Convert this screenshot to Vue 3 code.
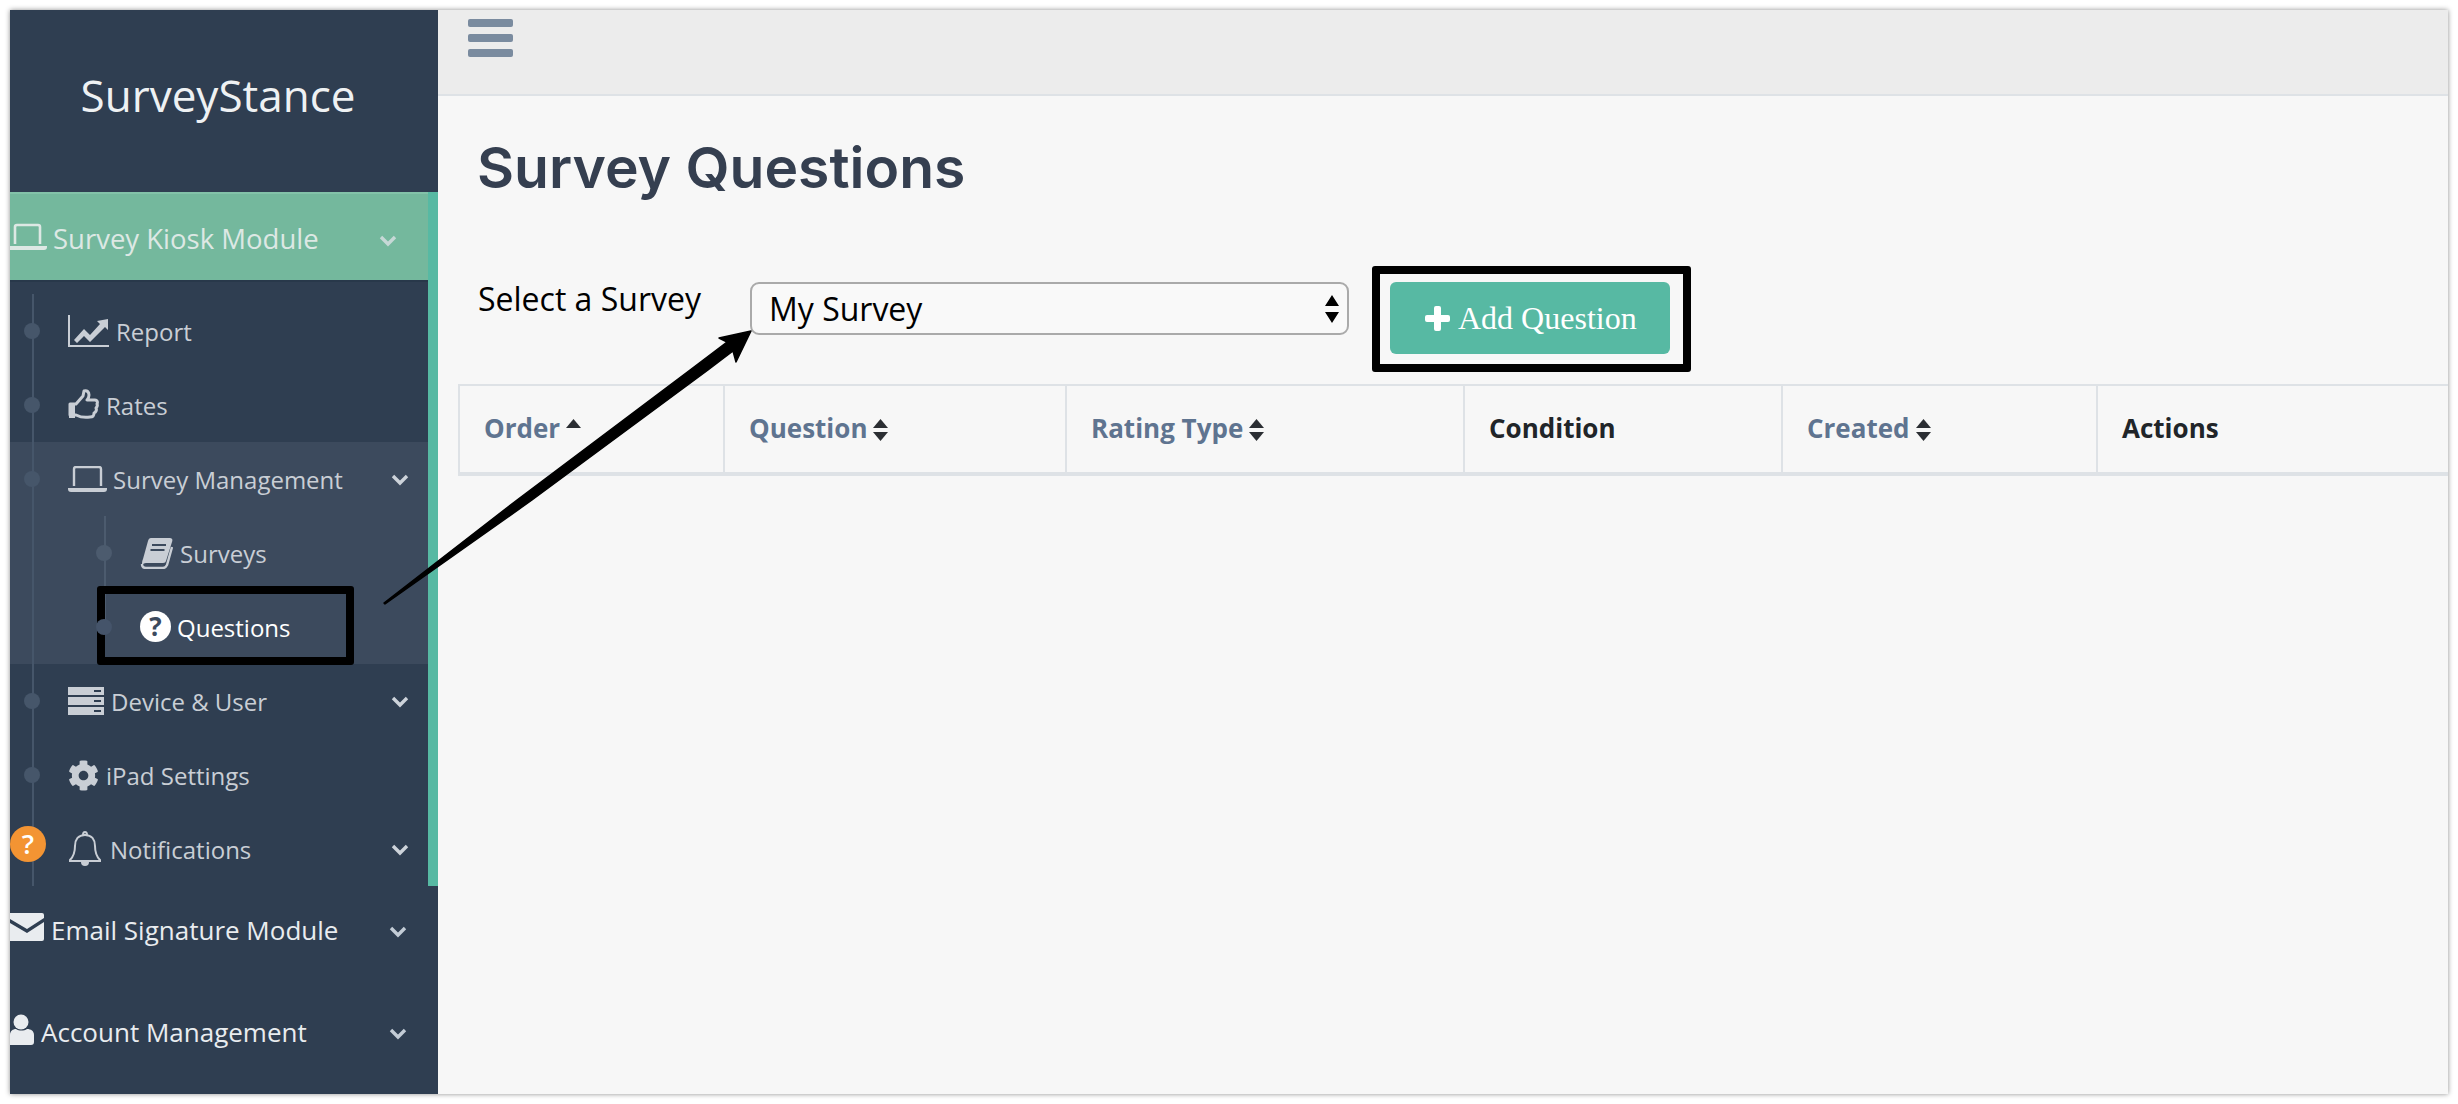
<script setup>
const columns = [
  { label: 'Order', sort: 'asc' },
  { label: 'Question', sort: 'both' },
  { label: 'Rating Type', sort: 'both' },
  { label: 'Condition', sort: '' },
  { label: 'Created', sort: 'both' },
  { label: 'Actions', sort: '' }
]
const cog = 'M487.4 315.7l-42.6-24.6c4.3-23.2 4.3-47 0-70.2l42.6-24.6c4.9-2.8 7.1-8.6 5.5-14-11.1-35.6-30-67.8-54.7-94.6-3.8-4.1-10-5.1-14.8-2.3L380.8 110c-17.9-15.4-38.5-27.3-60.8-35.1V25.8c0-5.6-3.9-10.5-9.4-11.7-36.7-8.2-74.3-7.8-109.2 0-5.5 1.2-9.4 6.1-9.4 11.7V75c-22.2 7.9-42.8 19.8-60.8 35.1L88.7 85.5c-4.9-2.8-11-1.9-14.8 2.3-24.7 26.7-43.6 58.9-54.7 94.6-1.7 5.4.6 11.2 5.5 14L67.3 221c-4.3 23.2-4.3 47 0 70.2l-42.6 24.6c-4.9 2.8-7.1 8.6-5.5 14 11.1 35.6 30 67.8 54.7 94.6 3.8 4.1 10 5.1 14.8 2.3l42.6-24.6c17.9 15.4 38.5 27.3 60.8 35.1v49.2c0 5.6 3.9 10.5 9.4 11.7 36.7 8.2 74.3 7.8 109.2 0 5.5-1.2 9.4-6.1 9.4-11.7v-49.2c22.2-7.9 42.8-19.8 60.8-35.1l42.6 24.6c4.9 2.8 11 1.9 14.8-2.3 24.7-26.7 43.6-58.9 54.7-94.6 1.5-5.5-.7-11.3-5.6-14.1zM256 336c-44.1 0-80-35.9-80-80s35.9-80 80-80 80 35.9 80 80-35.9 80-80 80z'
</script>

<template>
  <div class="page">
    <div class="window">
      <aside class="sidebar">
        <div class="brand">SurveyStance</div>
        <div class="module-group">
          <div class="module-head">
            <svg class="laptop-top" viewBox="0 0 37 29" width="37" height="29"><path d="M5 21V4a2 2 0 0 1 2-2h21a2 2 0 0 1 2 2v17" fill="none" stroke="currentColor" stroke-width="2.6"/><path d="M0 23h37v1a3 3 0 0 1-3 3H0z" fill="currentColor"/></svg>
            <span>Survey Kiosk Module</span>
            <svg class="chev head-chev" viewBox="0 0 18 12" width="18" height="12"><path d="M2 2l7 7 7-7" fill="none" stroke="currentColor" stroke-width="3.4"/></svg>
          </div>
          <div class="tree">
            <div class="row">
              <i class="dot"></i>
              <svg class="ico" style="width:41px" viewBox="0 0 41 32" width="41" height="32"><path d="M1 0v31h40" fill="none" stroke="currentColor" stroke-width="2"/><path d="M6 25l10-11 6 6L32 9l-3-3 11-2v11l-3-3-15 15-6-6-7 7z" fill="currentColor"/></svg>
              <span class="gap7">Report</span>
            </div>
            <div class="row">
              <i class="dot"></i>
              <svg class="ico" style="width:31px" viewBox="0 0 31 33" width="31" height="33"><path d="M2 15h6l7-8 1-5c3-1 5 1 5 4 0 2-1 4-2 5h8c2 0 3 2 2 4 1 2 0 3-1 4 1 2 0 4-2 5 0 3-1 4-4 4-6 1-10 0-14-2H2z" fill="none" stroke="currentColor" stroke-width="3" stroke-linejoin="round"/><path d="M1 15h6v14H1z" fill="currentColor"/></svg>
              <span class="gap7">Rates</span>
            </div>
            <div class="highlight">
              <div class="row">
                <i class="dot"></i>
                <svg class="ico" style="width:39px" viewBox="0 0 39 26" width="39" height="26"><path d="M6 20V3a2 2 0 0 1 2-2h23a2 2 0 0 1 2 2v17" fill="none" stroke="currentColor" stroke-width="2.4"/><path d="M0 22h39v1a3 3 0 0 1-3 3H3a3 3 0 0 1-3-3z" fill="currentColor"/></svg>
                <span class="gap6">Survey Management</span>
                <svg class="chev" viewBox="0 0 18 12" width="18" height="12"><path d="M2 2l7 7 7-7" fill="none" stroke="currentColor" stroke-width="3.4"/></svg>
              </div>
              <div class="subtree">
                <div class="row sub">
                  <i class="dot"></i>
                  <svg class="ico" style="width:33px" viewBox="0 0 33 31" width="33" height="31"><path d="M11 0h18c3 0 4 1 3 4l-6 19c-.5 1-1 2-3 2H6c-2 0-3 1-4 2 0-2 0-4 1-6L8 3c.5-2 1.500-3 3-3z" fill="currentColor"/><path d="M2 26c0 3 2 4 4 4h17c2 0 3-1 4-3l5-18" fill="none" stroke="currentColor" stroke-width="2.4"/><path d="M12 7h14M10.500 12h14" stroke="#3c4a5d" stroke-width="2"/></svg>
                  <span class="gap7">Surveys</span>
                </div>
                <div class="row sub current">
                  <i class="dot"></i>
                  <span class="help-circle">?</span>
                  <span class="gap6">Questions</span>
                </div>
              </div>
            </div>
            <div class="row">
              <i class="dot"></i>
              <svg class="ico" style="width:36px" viewBox="0 0 36 28" width="36" height="28"><path d="M0 0h36v8H0zM0 10h36v8H0zM0 20h36v8H0z" fill="currentColor"/><path d="M26 4h7M26 14h7M26 24h7" stroke="#2f3e51" stroke-width="2"/></svg>
              <span class="gap7">Device &amp; User</span>
              <svg class="chev" viewBox="0 0 18 12" width="18" height="12"><path d="M2 2l7 7 7-7" fill="none" stroke="currentColor" stroke-width="3.4"/></svg>
            </div>
            <div class="row">
              <i class="dot"></i>
              <svg class="ico" style="width:31px" viewBox="0 0 512 512" width="31" height="31"><path :d="cog" fill="currentColor"/></svg>
              <span class="gap7">iPad Settings</span>
            </div>
            <div class="row">
              <i class="dot hidden-dot"></i>
              <svg class="ico bell" style="width:34px" viewBox="0 0 34 36" width="34" height="36"><path d="M17 4c7 0 10 5 10 11 0 8 2 11 5 14v1H2v-1c3-3 5-6 5-14C7 9 10 4 17 4zM15 4c0-2 1-3 2-3s2 1 2 3" fill="none" stroke="currentColor" stroke-width="2"/><path d="M13 31a4 4 0 0 0 8 0z" fill="currentColor"/></svg>
              <span class="gap8">Notifications</span>
              <svg class="chev" viewBox="0 0 18 12" width="18" height="12"><path d="M2 2l7 7 7-7" fill="none" stroke="currentColor" stroke-width="3.4"/></svg>
            </div>
            <span class="help-badge">?</span>
          </div>
        </div>
        <div class="module-row">
          <svg viewBox="0 0 34 28" width="34" height="28"><path d="M0 0h32a2 2 0 0 1 2 2v3L17 16 0 6zM0 10l17 10 17-11v17a2 2 0 0 1-2 2H0z" fill="currentColor"/></svg>
          <span class="gap7">Email Signature Module</span>
          <svg class="chev low-chev" viewBox="0 0 18 12" width="18" height="12"><path d="M2 2l7 7 7-7" fill="none" stroke="currentColor" stroke-width="3.4"/></svg>
        </div>
        <div class="module-row account">
          <svg viewBox="0 0 24 31" width="24" height="31"><circle cx="11" cy="8" r="7.500" fill="currentColor"/><path d="M0 31V21c0-4 3-6 6-6 3 2 8 2 11 0 4 0 7 2 7 6v7a3 3 0 0 1-3 3z" fill="currentColor"/></svg>
          <span class="gap7">Account Management</span>
          <svg class="chev low-chev" viewBox="0 0 18 12" width="18" height="12"><path d="M2 2l7 7 7-7" fill="none" stroke="currentColor" stroke-width="3.4"/></svg>
        </div>
      </aside>

      <main class="main">
        <header class="topbar">
          <div class="burger"><i></i><i></i><i></i></div>
        </header>
        <section class="content">
          <h1 class="title">Survey Questions</h1>
          <div class="filter">
            <label class="filter-label">Select a Survey</label>
            <div class="select-wrap">
              <select class="survey-select"><option>My Survey</option></select>
              <svg class="select-arrows" viewBox="0 0 14 28" width="14" height="28"><path d="M7 0l7 11H0zM0 17h14L7 28z" fill="#000"/></svg>
            </div>
            <div class="button-frame">
              <button class="add-btn">
                <svg viewBox="0 0 25 25" width="25" height="25"><path d="M9 2a2 2 0 0 1 2-2h3a2 2 0 0 1 2 2v7h7a2 2 0 0 1 2 2v3a2 2 0 0 1-2 2h-7v7a2 2 0 0 1-2 2h-3a2 2 0 0 1-2-2v-7H2a2 2 0 0 1-2-2v-3a2 2 0 0 1 2-2h7z" fill="#fff"/></svg>
                <span>Add Question</span>
              </button>
            </div>
          </div>
          <div class="table-head">
            <div v-for="c in columns" :key="c.label" class="th">
              <span :class="{ sortable: c.sort }">{{ c.label }}</span>
              <svg v-if="c.sort" class="sort" viewBox="0 0 15 22" width="15" height="22">
                <path d="M7.500 0L15 9H0z" fill="#2b2e33"/>
                <path v-if="c.sort === 'both'" d="M0 13h15l-7.500 9z" fill="#2b2e33"/>
              </svg>
            </div>
          </div>
        </section>
      </main>

      <div class="mark-questions"></div>
      <svg class="arrow" viewBox="0 0 2458 1104" width="2458" height="1104">
        <path d="M384 603L517 500 690 370 727 342 719 338 751 331 736 362 733 351 708 370 532 500 385 604z" fill="#000" stroke="#000" stroke-width="1.500" stroke-linejoin="round"/>
      </svg>
    </div>
  </div>
</template>

<style>
html, body { margin: 0; background: #fff; }
</style>

<style scoped>
.page {
  width: 2458px;
  height: 1104px;
  padding: 10px;
  box-sizing: border-box;
  font-family: "Open Sans", "Noto Sans", sans-serif;
}
.window {
  display: flex;
  width: 2438px;
  height: 1084px;
  box-shadow: 0 0 5px rgba(0, 0, 0, .45);
  background: #f7f7f7;
}
.sidebar {
  width: 428px;
  flex: none;
  background: #2f3e51;
  color: #c9ced5;
  display: flex;
  flex-direction: column;
}
.brand {
  height: 182px;
  box-sizing: border-box;
  padding: 53px 12px 0 0;
  text-align: center;
  font-size: 44px;
  line-height: 64px;
  color: #eef1f3;
}
.module-group {
  height: 694px;
  box-sizing: border-box;
  border-right: 10px solid #57b9a3;
}
.module-head {
  height: 90px;
  box-sizing: border-box;
  background: #74b89d;
  border-top: 2px solid #83c2a9;
  border-bottom: 2px solid #28384a;
  color: #dde8e4;
  display: flex;
  align-items: center;
  font-size: 27.500px;
  position: relative;
}
.module-head span { margin-left: 6px; position: relative; top: 1px; }
.head-chev { position: absolute; left: 369px; top: 41px; color: #c6d8d6; }
.tree {
  position: relative;
  padding-top: 12px;
}
.tree::before {
  content: "";
  position: absolute;
  left: 22px;
  top: 12px;
  bottom: 0;
  width: 2px;
  background: #46566a;
  z-index: 1;
}
.row {
  height: 74px;
  display: flex;
  align-items: center;
  position: relative;
  padding-left: 58px;
  font-size: 24px;
  color: #c9ced5;
}
.row > span { position: relative; top: 0; }
.row .ico { flex: none; }
.gap6 { margin-left: 6px; }
.gap7 { margin-left: 7px; }
.gap8 { margin-left: 8px; }
.dot {
  position: absolute;
  left: 14px;
  top: 29px;
  width: 16px;
  height: 16px;
  border-radius: 50%;
  background: #46566a;
  z-index: 1;
}
.row .chev { position: absolute; left: 381px; top: 32px; color: #cdd3da; }
.highlight { background: #3c4a5d; }
.subtree { position: relative; }
.subtree::before {
  content: "";
  position: absolute;
  left: 94px;
  top: 0;
  height: 112px;
  width: 2px;
  background: #4c5b6e;
}
.sub { padding-left: 130px; }
.sub .dot { left: 86px; background: #4c5b6e; }
.current .dot { background: #45546a; }
.current { color: #fff; }
.help-circle {
  flex: none;
  width: 31px;
  height: 31px;
  border-radius: 50%;
  background: #fff;
  color: #3c4a5d;
  font-weight: 700;
  font-size: 26px;
  line-height: 31px;
  text-align: center;
  top: -1px !important;
}
.help-badge {
  position: absolute;
  left: 0;
  top: 544px;
  width: 36px;
  height: 36px;
  border-radius: 50%;
  background: #f39433;
  color: #fff;
  font-weight: 600;
  font-size: 27px;
  line-height: 36px;
  text-align: center;
  z-index: 2;
}
.hidden-dot { visibility: hidden; }
.module-row {
  height: 92px;
  display: flex;
  align-items: center;
  position: relative;
  font-size: 26px;
  color: #e9ecef;
  margin-top: -4px;
}
.module-row svg { flex: none; color: #e9ecef; position: relative; top: -1px; }
.module-row span { position: relative; top: 2px; }
.account { margin-top: 10px; }
.module-row .low-chev { position: absolute; left: 379px; top: 44px; color: #c3ccd6; }

.main {
  flex: 1;
  display: flex;
  flex-direction: column;
  min-width: 0;
}
.topbar {
  height: 86px;
  box-sizing: border-box;
  background: #ececec;
  border-bottom: 2px solid #dee2e6;
  padding: 9px 0 0 30px;
}
.burger { width: 45px; display: flex; flex-direction: column; gap: 7px; }
.burger i { display: block; height: 8px; border-radius: 2px; background: #7a8b9f; }
.content { padding-left: 20px; flex: 1; }
.title {
  margin: 37px 0 0 19px;
  font-family: Inter, "Noto Sans", sans-serif;
  font-weight: 600;
  font-size: 57px;
  line-height: 70px;
  color: #353f50;
}
.filter {
  position: relative;
  display: flex;
  align-items: flex-start;
  margin-top: 63px;
  padding-left: 20px;
  height: 106px;
}
.filter-label {
  font-size: 32px;
  line-height: 40px;
  color: #000;
  width: 272px;
  padding-top: 13px;
  flex: none;
}
.select-wrap {
  position: relative;
  margin-top: 16px;
  width: 599px;
  height: 53px;
  flex: none;
}
.survey-select {
  appearance: none;
  width: 100%;
  height: 100%;
  box-sizing: border-box;
  border: 2px solid #aaa;
  border-radius: 9px;
  background: #f9f9f9;
  padding: 0 0 0 17px;
  font-family: "Open Sans", sans-serif;
  font-size: 32px;
  color: #000;
}
.select-arrows { position: absolute; right: 10px; top: 13px; }
.button-frame {
  box-sizing: border-box;
  width: 319px;
  height: 106px;
  margin-left: 23px;
  border: 8px solid #000;
  border-radius: 3px;
  padding: 8px 0 0 10px;
  flex: none;
}
.add-btn {
  width: 280px;
  height: 72px;
  border: 0;
  border-radius: 6px;
  background: #57b9a3;
  color: #fff;
  display: flex;
  align-items: center;
  padding: 0 0 0 35px;
  font-family: "Liberation Serif", serif;
  font-size: 32px;
  gap: 8px;
}
.table-head {
  display: grid;
  grid-template-columns: 265px 342px 398px 318px 315px 1fr;
  height: 92px;
  box-sizing: border-box;
  border-top: 2px solid #dee2e6;
  border-left: 2px solid #dee2e6;
  border-bottom: 4px solid #dee2e6;
  margin-top: 12px;
}
.th {
  display: flex;
  align-items: center;
  gap: 6px;
  padding-left: 24px;
  border-right: 2px solid #dee2e6;
  font-size: 26px;
  font-weight: 700;
  color: #212529;
}
.th span { position: relative; top: -1px; }
.th:first-child { padding-left: 24px; }
.th:last-child { border-right: 0; padding-left: 24px; }
.sortable { color: #5f7490; }
.sort { align-self: center; margin-top: 2px; }

.mark-questions {
  position: absolute;
  left: 97px;
  top: 586px;
  width: 257px;
  height: 79px;
  box-sizing: border-box;
  border: 8px solid #000;
  border-radius: 3px;
}
.arrow { position: absolute; left: 0; top: 0; pointer-events: none; }
</style>
